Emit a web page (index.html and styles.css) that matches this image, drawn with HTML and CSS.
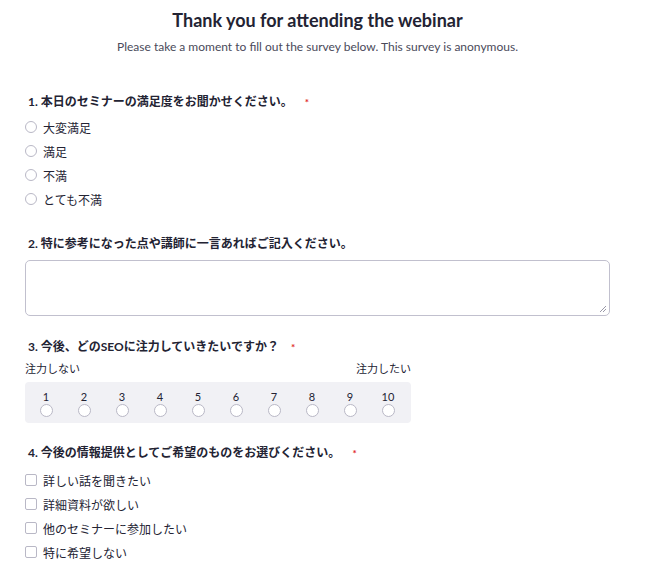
FILE: index.html
```html
<!DOCTYPE html>
<html lang="ja">
<head>
<meta charset="utf-8">
<link rel="stylesheet" href="styles.css">
</head>
<body>
<div class="page">
  <h1 class="title">Thank you for attending the webinar</h1>
  <p class="subtitle">Please take a moment to fill out the survey below. This survey is anonymous.</p>

  <div class="question q1">
    <div class="qtitle">1. 本日のセミナーの満足度をお聞かせください。<span class="req">*</span></div>
    <div class="options">
      <label class="opt"><span class="radio"></span>大変満足</label>
      <label class="opt"><span class="radio"></span>満足</label>
      <label class="opt"><span class="radio"></span>不満</label>
      <label class="opt"><span class="radio"></span>とても不満</label>
    </div>
  </div>

  <div class="question q2">
    <div class="qtitle">2. 特に参考になった点や講師に一言あればご記入ください。</div>
    <div class="textarea"><svg class="grip" width="8" height="8" viewBox="0 0 8 8"><path d="M7 1L1 7M7 4L4 7" stroke="#9a99a8" stroke-width="1"/></svg></div>
  </div>

  <div class="question q3">
    <div class="qtitle">3. 今後、どのSEOに注力していきたいですか？<span class="req">*</span></div>
    <div class="scale-labels"><span>注力しない</span><span>注力したい</span></div>
    <div class="scale">
      <div class="cell"><span class="num">1</span><span class="radio"></span></div>
      <div class="cell"><span class="num">2</span><span class="radio"></span></div>
      <div class="cell"><span class="num">3</span><span class="radio"></span></div>
      <div class="cell"><span class="num">4</span><span class="radio"></span></div>
      <div class="cell"><span class="num">5</span><span class="radio"></span></div>
      <div class="cell"><span class="num">6</span><span class="radio"></span></div>
      <div class="cell"><span class="num">7</span><span class="radio"></span></div>
      <div class="cell"><span class="num">8</span><span class="radio"></span></div>
      <div class="cell"><span class="num">9</span><span class="radio"></span></div>
      <div class="cell"><span class="num">10</span><span class="radio"></span></div>
    </div>
  </div>

  <div class="question q4">
    <div class="qtitle">4. 今後の情報提供としてご希望のものをお選びください。<span class="req">*</span></div>
    <div class="options">
      <label class="opt"><span class="check"></span>詳しい話を聞きたい</label>
      <label class="opt"><span class="check"></span>詳細資料が欲しい</label>
      <label class="opt"><span class="check"></span>他のセミナーに参加したい</label>
      <label class="opt"><span class="check"></span>特に希望しない</label>
    </div>
  </div>
</div>
</body>
</html>
```

FILE: styles.css
```css
html, body {
  margin: 0;
  padding: 0;
  background: #ffffff;
}
body {
  font-family: "Lato", "Noto Sans CJK JP", sans-serif;
  color: #232333;
}
.page {
  width: 585px;
  margin-left: 25px;
  padding-top: 8px;
}
.title {
  margin: 0;
  text-align: center;
  font-size: 18px;
  font-weight: 700;
  line-height: 24px;
  color: #232333;
}
.subtitle {
  margin: 7px 0 0 0;
  text-align: center;
  font-size: 12px;
  line-height: 16px;
  color: #4a4a5a;
}
.question {
  display: flex;
  flex-direction: column;
}
.q1 { margin-top: 39px; }
.q2 { margin-top: 25px; }
.q3 { margin-top: 23px; }
.q4 { margin-top: 22px; }
.qtitle {
  font-size: 12px;
  font-weight: 700;
  line-height: 16px;
  padding-left: 3px;
  color: #232333;
}
.req {
  color: #e02828;
  font-size: 10px;
  margin-left: 12px;
  vertical-align: top;
}
.options {
  display: flex;
  flex-direction: column;
}
.q1 .options { margin-top: 5px; }
.q4 .options { margin-top: 7px; }
.opt {
  display: flex;
  align-items: center;
  height: 24px;
  font-size: 12px;
  color: #232333;
}
.radio {
  width: 10px;
  height: 10px;
  border: 1px solid #b9b8c6;
  border-radius: 50%;
  background: #fff;
  flex: none;
}
.opt .radio, .opt .check {
  margin-left: 0;
  margin-right: 6px;
}
.check {
  width: 10px;
  height: 10px;
  border: 1px solid #b9b8c6;
  border-radius: 2px;
  background: #fff;
  flex: none;
}
.textarea {
  position: relative;
  margin-top: 8px;
  height: 54px;
  border: 1px solid #c1c0ce;
  border-radius: 5px;
}
.grip {
  position: absolute;
  right: 2px;
  bottom: 2px;
}
.scale-labels {
  display: flex;
  justify-content: space-between;
  width: 386px;
  font-size: 11px;
  line-height: 14px;
  margin-top: 7px;
  color: #232333;
}
.scale {
  display: grid;
  grid-template-columns: repeat(10, 38px);
  width: 386px;
  box-sizing: border-box;
  padding: 8px 4px 6px 2px;
  margin-top: 6px;
  background: #f1f1f5;
  border-radius: 4px;
}
.cell {
  display: flex;
  flex-direction: column;
  align-items: center;
  gap: 1px;
}
.num {
  font-size: 11px;
  line-height: 13px;
  color: #232333;
}
.cell .radio {
  width: 11px;
  height: 11px;
}
```
